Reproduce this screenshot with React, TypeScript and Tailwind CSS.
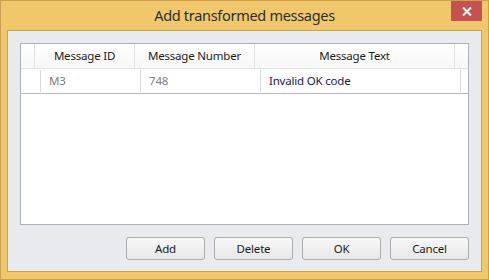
import React from "react";

const font = { fontFamily: '"Noto Sans", "Liberation Sans", sans-serif' };

function Btn({ label }: { label: string }) {
  return (
    <button className="w-[79px] h-[23px] border border-[#adadad] rounded-[3px] bg-gradient-to-b from-[#f8f8f8] to-[#e7e7e7] text-[11.5px] tracking-[-0.2px] text-[#1b1b1b] leading-none flex items-center justify-center">
      {label}
    </button>
  );
}

export default function App() {
  return (
    <div
      className="w-[489px] h-[280px] bg-[#f0c86b] border border-[#c7a250] flex flex-col"
      style={font}
    >
      <div className="relative h-[29px] shrink-0 flex items-center justify-center">
        <span className="text-[14.5px] tracking-[-0.3px] text-[#2a2f36] leading-none pb-[1px]">
          Add transformed messages
        </span>
        <div className="absolute top-0 right-[6px] w-[31px] h-[20px] bg-[#c75050] flex items-center justify-center">
          <svg width="10" height="9" viewBox="0 0 10 9">
            <path d="M1 0.5 L9 8.5 M9 0.5 L1 8.5" stroke="#ffffff" strokeWidth="2" />
          </svg>
        </div>
      </div>
      <div className="mx-[6px] h-[242px] shrink-0 border border-[#c7a250] bg-[#e9eaee] p-[12px] pb-[11px] flex flex-col">
        <div className="flex-1 border border-[#abb1bc] bg-white flex flex-col">
          <div className="h-[25px] flex border-b border-[#e3e3e3] bg-gradient-to-b from-[#ffffff] to-[#f7f7f7] text-[11.5px] tracking-[-0.2px] text-[#1b1b1b]">
            <div className="w-[14px] border-r border-[#e3e3e3]" />
            <div className="w-[100px] border-r border-[#e3e3e3] flex items-center justify-center">Message ID</div>
            <div className="w-[120px] border-r border-[#e3e3e3] flex items-center justify-center">Message Number</div>
            <div className="w-[200px] border-r border-[#e3e3e3] flex items-center justify-center">Message Text</div>
            <div className="flex-1" />
          </div>
          <div className="h-[25px] flex border-b border-[#b4b8bf] text-[11.5px] tracking-[-0.2px]">
            <div className="w-[20px] flex items-center"><div className="ml-auto h-[22px] border-r border-[#d9d9d9]" /></div>
            <div className="w-[100px] flex items-center pl-[8px] text-[#7d7d7d]">M3<div className="ml-auto h-[22px] border-r border-[#d9d9d9]" /></div>
            <div className="w-[120px] flex items-center pl-[8px] text-[#7d7d7d]">748<div className="ml-auto h-[22px] border-r border-[#d9d9d9]" /></div>
            <div className="w-[200px] flex items-center pl-[8px] text-[#1d1a3e]">Invalid OK code<div className="ml-auto h-[22px] border-r border-[#d9d9d9]" /></div>
            <div className="flex-1" />
          </div>
        </div>
        <div className="mt-[12px] flex justify-end gap-[9px]">
          <Btn label="Add" />
          <Btn label="Delete" />
          <Btn label="OK" />
          <Btn label="Cancel" />
        </div>
      </div>
    </div>
  );
}
